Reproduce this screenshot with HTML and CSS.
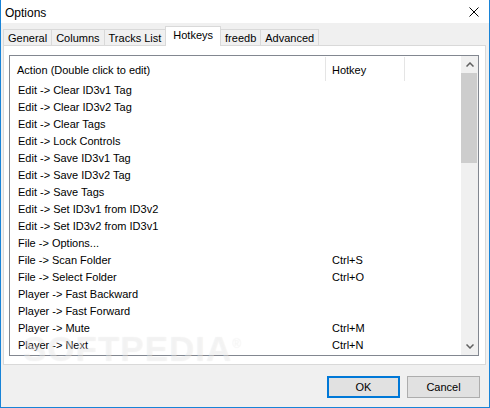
FILE: index.html
```html
<!DOCTYPE html>
<html lang="en">
<head>
    <meta charset="UTF-8">
    <title>Options</title>
    <link rel="stylesheet" href="styles.css">
</head>
<body>

    <!-- Dialog Window -->
    <div class="window">
        <div class="titlebar">
            <span class="title">Options</span>
            <svg class="close" width="10" height="10" viewBox="0 0 10 10">
                <path d="M0.5 0.5 L9.5 9.5 M9.5 0.5 L0.5 9.5" stroke="#000" stroke-width="1" fill="none"/>
            </svg>
        </div>

        <div class="body">
            <!-- Tabs -->
            <div class="tabs">
                <div class="tab">General</div>
                <div class="tab">Columns</div>
                <div class="tab">Tracks List</div>
                <div class="tab active">Hotkeys</div>
                <div class="tab">freedb</div>
                <div class="tab">Advanced</div>
            </div>

            <!-- Hotkeys Page -->
            <div class="panel">
                <div class="listbox">
                    <div class="list">
                        <div class="list-head">
                            <span class="col-action">Action (Double click to edit)</span>
                            <span class="col-key">Hotkey</span>
                            <span class="col-rest"></span>
                        </div>
                        <div class="row"><span class="col-action">Edit -&gt; Clear ID3v1 Tag</span><span class="col-key"></span></div>
                        <div class="row"><span class="col-action">Edit -&gt; Clear ID3v2 Tag</span><span class="col-key"></span></div>
                        <div class="row"><span class="col-action">Edit -&gt; Clear Tags</span><span class="col-key"></span></div>
                        <div class="row"><span class="col-action">Edit -&gt; Lock Controls</span><span class="col-key"></span></div>
                        <div class="row"><span class="col-action">Edit -&gt; Save ID3v1 Tag</span><span class="col-key"></span></div>
                        <div class="row"><span class="col-action">Edit -&gt; Save ID3v2 Tag</span><span class="col-key"></span></div>
                        <div class="row"><span class="col-action">Edit -&gt; Save Tags</span><span class="col-key"></span></div>
                        <div class="row"><span class="col-action">Edit -&gt; Set ID3v1 from ID3v2</span><span class="col-key"></span></div>
                        <div class="row"><span class="col-action">Edit -&gt; Set ID3v2 from ID3v1</span><span class="col-key"></span></div>
                        <div class="row"><span class="col-action">File -&gt; Options...</span><span class="col-key"></span></div>
                        <div class="row"><span class="col-action">File -&gt; Scan Folder</span><span class="col-key">Ctrl+S</span></div>
                        <div class="row"><span class="col-action">File -&gt; Select Folder</span><span class="col-key">Ctrl+O</span></div>
                        <div class="row"><span class="col-action">Player -&gt; Fast Backward</span><span class="col-key"></span></div>
                        <div class="row"><span class="col-action">Player -&gt; Fast Forward</span><span class="col-key"></span></div>
                        <div class="row"><span class="col-action">Player -&gt; Mute</span><span class="col-key">Ctrl+M</span></div>
                        <div class="row"><span class="col-action">Player -&gt; Next</span><span class="col-key">Ctrl+N</span></div>
                    </div>

                    <!-- Vertical Scrollbar -->
                    <div class="scrollbar">
                        <div class="arrow">
                            <svg width="8" height="5" viewBox="0 0 8 5">
                                <path d="M0.5 4.5 L4 1 L7.5 4.5" stroke="#606060" stroke-width="1.5" fill="none"/>
                            </svg>
                        </div>
                        <div class="thumb"></div>
                        <div class="track"></div>
                        <div class="arrow">
                            <svg width="8" height="5" viewBox="0 0 8 5">
                                <path d="M0.5 0.5 L4 4 L7.5 0.5" stroke="#606060" stroke-width="1.5" fill="none"/>
                            </svg>
                        </div>
                    </div>
                </div>
            </div>

            <!-- Dialog Buttons -->
            <div class="buttons">
                <button class="btn default">OK</button>
                <button class="btn">Cancel</button>
            </div>
        </div>

        <!-- Watermark -->
        <div class="watermark">SOFTPEDIA<sup>®</sup></div>
    </div>

</body>
</html>
```

FILE: styles.css
```css
/* General */
body {
    margin: 0;
    font-family: 'Liberation Sans', Arial, sans-serif;
    font-size: 11px;
    color: #000;
    background: #f0f0f0;
}

/* Window frame */
.window {
    position: relative;
    width: 490px;
    height: 408px;
    box-sizing: border-box;
    border: 1px solid #1883d7;
    border-top: none;
    background: #f0f0f0;
    display: flex;
    flex-direction: column;
    overflow: hidden;
}

.titlebar {
    height: 23px;
    background: #fff;
    display: flex;
    align-items: center;
    justify-content: space-between;
    padding: 0 10px 0 4px;
    flex: none;
}

.title {
    font-size: 12px;
    padding-top: 2px;
}

.close {
    display: block;
    margin-top: 1px;
}

.body {
    flex: 1;
    display: flex;
    flex-direction: column;
    padding: 0 3px 0 2px;
}

/* Tabs */
.tabs {
    height: 22px;
    display: flex;
    align-items: flex-end;
    flex: none;
}

.tab {
    height: 16px;
    line-height: 16px;
    padding: 0 4px;
    border: 1px solid #d9d9d9;
    border-bottom: none;
    box-sizing: border-box;
    background: #f0f0f0;
    margin-left: -1px;
}

.tab:first-child {
    margin-left: 0;
}

.tab.active {
    height: 20px;
    line-height: 16px;
    background: #fff;
    padding: 0 7px;
    margin-bottom: -1px;
    position: relative;
    z-index: 1;
}

/* Tab page */
.panel {
    height: 320px;
    box-sizing: border-box;
    border: 1px solid #d9d9d9;
    background: #fff;
    padding: 9px 6px 8px 5px;
    flex: none;
}

.listbox {
    height: 100%;
    box-sizing: border-box;
    border: 1px solid #828790;
    display: flex;
}

.list {
    flex: 1;
    overflow: hidden;
}

.list-head {
    height: 25px;
    display: flex;
    align-items: stretch;
}

.list-head span {
    display: flex;
    align-items: center;
    padding-top: 1px;
}

.list-head .col-action {
    border-right: 1px solid #e5e5e5;
    margin: 1px 0 0;
}

.list-head .col-key {
    border-right: 1px solid #e5e5e5;
    margin-top: 1px;
}

.row {
    height: 17px;
    display: flex;
    align-items: center;
}

.col-action {
    width: 316px;
    box-sizing: border-box;
    padding-left: 7px;
    white-space: nowrap;
}

.col-key {
    width: 79px;
    box-sizing: border-box;
    padding-left: 6px;
}

.row .col-action {
    padding-left: 8px;
}

.row .col-key {
    padding-left: 6px;
}

/* Scrollbar */
.scrollbar {
    width: 17px;
    background: #f0f0f0;
    display: flex;
    flex-direction: column;
}

.arrow {
    height: 17px;
    display: flex;
    align-items: center;
    justify-content: center;
}

.arrow svg {
    display: block;
}

.thumb {
    height: 90px;
    margin: 0 1px 0 0;
    background: #cdcdcd;
}

.track {
    flex: 1;
}

/* Buttons */
.buttons {
    flex: 1;
    display: flex;
    justify-content: flex-end;
    align-items: flex-start;
    gap: 7px;
    padding: 11px 6px 0 0;
}

.btn {
    width: 73px;
    height: 22px;
    box-sizing: border-box;
    font-family: 'Liberation Sans', Arial, sans-serif;
    font-size: 11px;
    background: #e1e1e1;
    border: 1px solid #adadad;
    padding: 0;
    color: #000;
}

.btn.default {
    border: 2px solid #0078d7;
}

/* Watermark */
.watermark {
    position: absolute;
    left: 22px;
    top: 329px;
    font-family: 'Liberation Sans', Arial, sans-serif;
    font-size: 35px;
    font-weight: bold;
    letter-spacing: 1px;
    color: rgba(255, 255, 255, 0.4);
    text-shadow: 0 0 1px rgba(0, 0, 0, 0.08);
    pointer-events: none;
}

.watermark sup {
    font-size: 12px;
    font-weight: normal;
}
```
